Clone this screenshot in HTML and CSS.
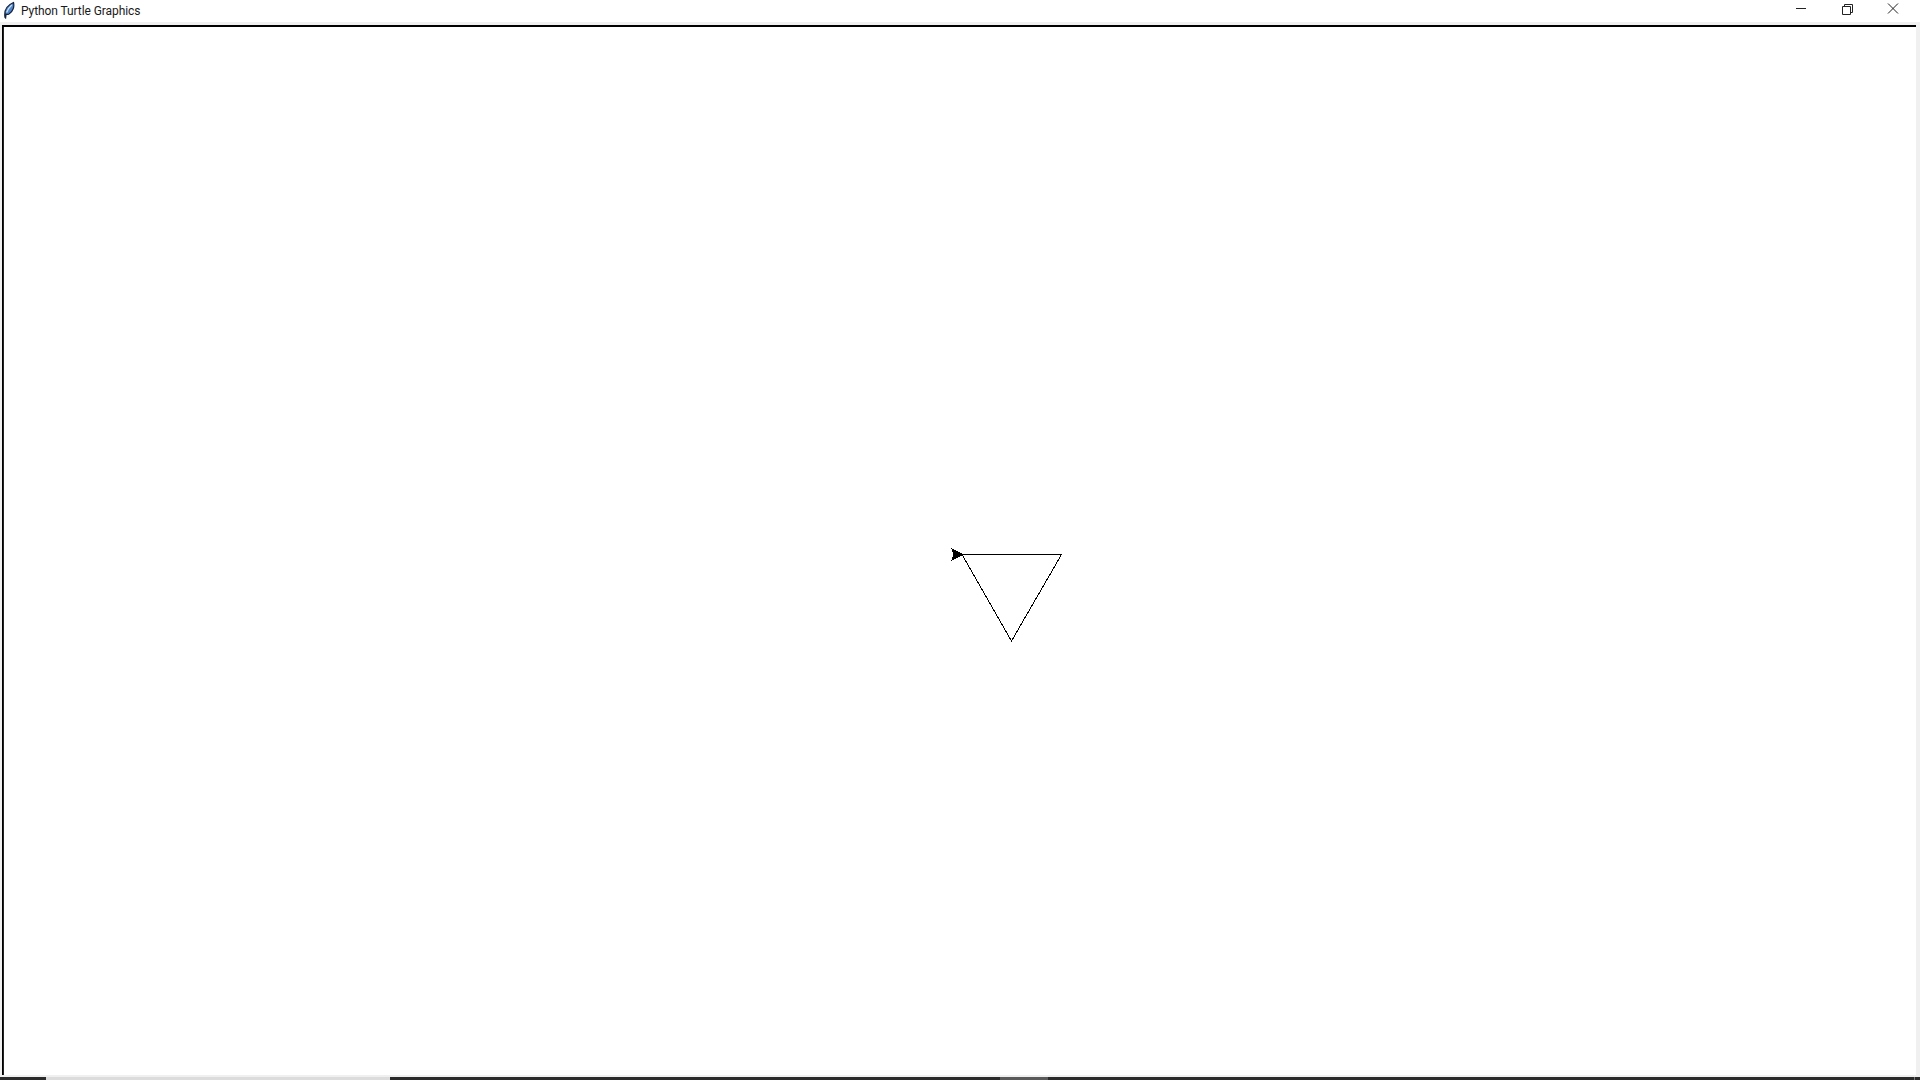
FILE: index.html
```html
<!DOCTYPE html>
<html lang="en">
<head>
<meta charset="utf-8">
<title>Python Turtle Graphics</title>
<link rel="stylesheet" href="styles.css">
</head>
<body>
<div class="window">
  <header class="titlebar">
    <svg class="app-icon" width="16" height="18" viewBox="0 0 16 18" aria-hidden="true">
      <path d="M4 16.5 C3 10.5 5.5 4.5 12.5 1.5 C13.5 5.5 12.2 10.5 8 13 C6.8 13.6 5.8 13.5 5.1 13.2 L4.6 17 Z" fill="#4f86cc" stroke="#16233c" stroke-width="1.2"/>
      <path d="M5.6 11.5 C6.5 8.5 8 6.5 10.8 4" stroke="#cfe2f8" stroke-width="1.2" fill="none"/>
    </svg>
    <span class="title">Python Turtle Graphics</span>
    <div class="controls">
      <svg class="ctl" width="46" height="18" viewBox="0 0 46 18" aria-hidden="true"><path d="M18 8.5H28" stroke="#222" stroke-width="1"/></svg>
      <svg class="ctl" width="46" height="18" viewBox="0 0 46 18" aria-hidden="true"><path d="M18.5 6.5H26.5V14.5H18.5ZM20.5 6.5V4.5H28.5V12.5H26.5" fill="none" stroke="#222" stroke-width="1"/></svg>
      <svg class="ctl" width="46" height="18" viewBox="0 0 46 18" aria-hidden="true"><path d="M18 3.5L28 13.5M28 3.5L18 13.5" fill="none" stroke="#222" stroke-width="1"/></svg>
    </div>
  </header>
  <main class="frame">
    <svg class="canvas" viewBox="3 27 1911 1048" preserveAspectRatio="xMinYMin" aria-label="Turtle drawing">
      <path class="line" d="M962 554.5H1061.5L1011.5 641L962 554.5"/>
      <path class="turtle" d="M951 548L964 554.5L951 561L953.5 554.5Z"/>
    </svg>
  </main>
  <div class="strip">
    <span class="seg seg-a"></span>
    <span class="seg seg-b"></span>
    <span class="seg seg-c"></span>
    <span class="seg seg-d"></span>
    <span class="seg seg-e"></span>
    <span class="seg seg-f"></span>
  </div>
</div>
</body>
</html>
```

FILE: styles.css
```css
html, body {
  margin: 0;
  height: 100%;
  background: #fff;
  overflow: hidden;
}

.window {
  display: flex;
  flex-direction: column;
  width: 1920px;
  height: 1080px;
}

.titlebar {
  display: flex;
  align-items: center;
  flex: 0 0 22px;
  height: 22px;
  background: #fff;
}

.app-icon {
  margin-left: 1px;
  margin-right: 4px;
  margin-top: -2px;
  flex: none;
}

.title {
  font-family: Roboto, "Noto Sans", sans-serif;
  font-size: 12px;
  letter-spacing: -0.08px;
  color: #1a1a1a;
  line-height: 20px;
  margin-top: -1px;
}

.controls {
  display: flex;
  margin-left: auto;
  padding-right: 4px;
  align-self: flex-start;
}

.ctl {
  display: block;
}

.frame {
  flex: 1;
  min-height: 0;
  display: flex;
  background: #f0f0f0;
  padding: 3px 4px 2px 2px;
}

.canvas {
  display: block;
  flex: 1;
  min-width: 0;
  height: 100%;
  box-sizing: border-box;
  background: #fff;
  border-top: 2px solid #000;
  border-left: 1px solid #000;
  box-shadow: inset 1px 0 0 #222;
  shape-rendering: crispEdges;
}

.line {
  fill: none;
  stroke: #000;
  stroke-width: 1;
}

.turtle {
  fill: #000;
}

.strip {
  display: flex;
  flex: 0 0 3px;
  height: 3px;
}

.seg { display: block; height: 100%; }
.seg-a { flex: 0 0 46px; background: #2b2b2b; }
.seg-b { flex: 0 0 344px; background: #dcdcdc; }
.seg-c { flex: 0 0 610px; background: #2b2b2b; }
.seg-d { flex: 0 0 48px; background: #5a5a5a; }
.seg-e { flex: 1; background: #2b2b2b; }
.seg-f { flex: 0 0 6px; background: #2b2b2b; border-left: 1px solid #777; box-sizing: border-box; }
```
